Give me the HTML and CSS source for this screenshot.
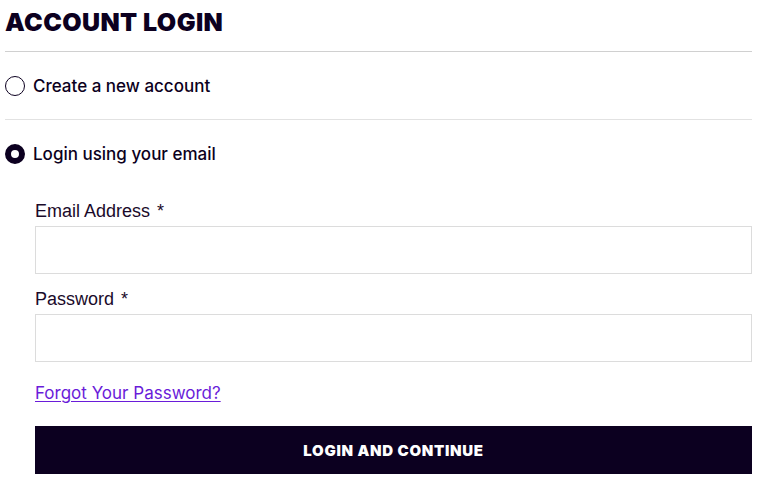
FILE: index.html
```html
<!DOCTYPE html>
<html lang="en">
<head>
<meta charset="utf-8">
<title>Account Login</title>
<link rel="stylesheet" href="styles.css">
</head>
<body>
<main class="login">
  <h1 class="login-title">ACCOUNT LOGIN</h1>
  <div class="option">
    <span class="radio"></span>
    <span class="option-label">Create a new account</span>
  </div>
  <div class="option option-active">
    <span class="radio radio-checked"></span>
    <span class="option-label">Login using your email</span>
  </div>
  <form class="login-form">
    <label class="field">
      <span class="field-label">Email Address <span class="req">*</span></span>
      <input class="field-input" type="email">
    </label>
    <label class="field">
      <span class="field-label">Password <span class="req">*</span></span>
      <input class="field-input" type="password">
    </label>
    <a class="forgot" href="#">Forgot Your Password?</a>
    <button class="submit" type="button">LOGIN AND CONTINUE</button>
  </form>
</main>
</body>
</html>
```
FILE: styles.css
```css
* { box-sizing: border-box; }

body {
  margin: 0;
  padding: 0 7px 0 5px;
  background: #fff;
  color: #0c0020;
  font-family: "Inter", "Liberation Sans", sans-serif;
}

.login-title {
  margin: 0;
  padding: 10px 0 16px;
  font-size: 25px;
  line-height: 25px;
  font-weight: 900;
  letter-spacing: 0.4px;
  border-bottom: 1px solid #d0d0d0;
}

.option {
  display: flex;
  align-items: center;
  gap: 8px;
  height: 68px;
  border-bottom: 1px solid #e2e2e2;
  font-size: 17px;
  font-weight: 500;
}

.option-active {
  border-bottom: none;
  padding-bottom: 1px;
}

.radio {
  width: 20px;
  height: 20px;
  border-radius: 50%;
  border: 1.5px solid #0c0020;
  flex: none;
}

.radio-checked {
  border: 6px solid #0c0020;
}

.login-form {
  display: flex;
  flex-direction: column;
  padding-left: 30px;
  margin-top: 13px;
}

.field {
  display: flex;
  flex-direction: column;
  gap: 5px;
  margin-bottom: 15px;
}

.field-label {
  font-family: "Liberation Sans", Arial, sans-serif;
  font-size: 18px;
  line-height: 20px;
  color: #1a0a2a;
}

.req {
  margin-left: 2px;
  color: #1a0a2a;
}

.field-input {
  height: 48px;
  border: 1px solid #dcdcdc;
  border-radius: 0;
  background: #fff;
  outline: none;
}

.forgot {
  align-self: flex-start;
  margin-top: 6px;
  font-size: 17px;
  line-height: 20px;
  color: #6a1cd9;
  text-decoration: underline;
  text-underline-offset: 2px;
}

.submit {
  margin-top: 23px;
  height: 48px;
  border: none;
  background: #0c0020;
  color: #fff;
  font-family: "Inter", "Liberation Sans", sans-serif;
  font-size: 15px;
  font-weight: 900;
  letter-spacing: 0.7px;
  cursor: pointer;
}
```
